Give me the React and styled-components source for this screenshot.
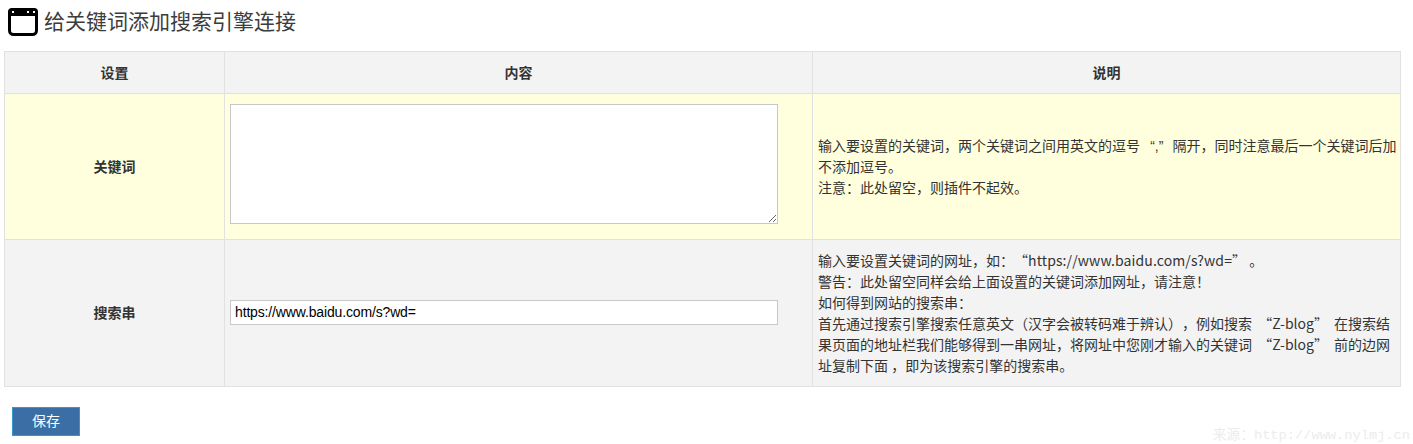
import styled, { createGlobalStyle } from 'styled-components';

const GlobalStyle = createGlobalStyle`
  html, body {
    margin: 0;
    padding: 0;
    background: #fff;
    font-family: "Noto Sans CJK SC", "Liberation Sans", sans-serif;
    color: #333;
  }
`;

function WindowIcon() {
  return (
    <svg width="30" height="28" viewBox="0 0 30 28">
      <rect x="1.5" y="1.5" width="27" height="25" rx="4" fill="#fff" stroke="#000" strokeWidth="3" />
      <path d="M4 0h22a4 4 0 0 1 4 4v4H0V4a4 4 0 0 1 4-4z" fill="#000" />
      <rect x="4" y="3" width="2" height="2" fill="#fff" />
      <rect x="19" y="3" width="2" height="2" fill="#fff" />
      <rect x="25" y="3" width="2" height="2" fill="#fff" />
    </svg>
  );
}

export default function App() {
  return (
    <>
      <GlobalStyle />
      <Page>
        <Title>
          <WindowIcon />
          <h1>给关键词添加搜索引擎连接</h1>
        </Title>

        <SettingTable>
          <colgroup>
            <col style={{ width: 220 }} />
            <col style={{ width: 588 }} />
            <col style={{ width: 588 }} />
          </colgroup>
          <thead>
            <tr>
              <HeadCell>设置</HeadCell>
              <HeadCell>内容</HeadCell>
              <HeadCell>说明</HeadCell>
            </tr>
          </thead>
          <tbody>
            <Row $tone="#ffffdd" $height={146}>
              <KeyCell>关键词</KeyCell>
              <td>
                <KeywordArea />
              </td>
              <NoteCell>
                输入要设置的关键词，两个关键词之间用英文的逗号 <CommaQuote>“,”</CommaQuote> 隔开，同时注意最后一个关键词后加
                <br />
                不添加逗号。
                <br />
                注意：此处留空，则插件不起效。
              </NoteCell>
            </Row>
            <Row $tone="#f3f3f3" $height={147}>
              <KeyCell>搜索串</KeyCell>
              <td>
                <SearchInput defaultValue="https://www.baidu.com/s?wd=" />
              </td>
              <NoteCell>
                输入要设置关键词的网址，如：<UrlQuote>“https://www.baidu.com/s?wd=”</UrlQuote> 。
                <br />
                警告：此处留空同样会给上面设置的关键词添加网址，请注意！
                <br />
                如何得到网站的搜索串：
                <br />
                首先通过搜索引擎搜索任意英文（汉字会被转码难于辨认），例如搜索 <WordQuote>“Z-blog”</WordQuote> 在搜索结
                <br />
                果页面的地址栏我们能够得到一串网址，将网址中您刚才输入的关键词 <WordQuote>“Z-blog”</WordQuote> 前的边网
                <br />
                址复制下面 ，即为该搜索引擎的搜索串。
              </NoteCell>
            </Row>
          </tbody>
        </SettingTable>

        <SaveButton type="button">保存</SaveButton>
        <Watermark>来源：http://www.nylmj.cn</Watermark>
      </Page>
    </>
  );
}

const Page = styled.div`
  position: relative;
  width: 1413px;
  height: 444px;
  overflow: hidden;
  padding: 7px 0 0 4px;
  box-sizing: border-box;
`;

const Title = styled.div`
  display: flex;
  align-items: center;
  gap: 6px;
  height: 30px;
  padding-left: 4px;
  margin-bottom: 14px;

  h1 {
    margin: 0 0 4px;
    font-size: 21px;
    line-height: 26px;
    font-weight: 400;
    color: #3c3c3c;
  }
`;

const SettingTable = styled.table`
  width: 1396px;
  table-layout: fixed;
  border-collapse: collapse;
  font-size: 14px;

  th,
  td {
    border: 1px solid #e1e1e1;
    padding: 0 5px;
    box-sizing: border-box;
  }
`;

const HeadCell = styled.th`
  height: 42px;
  background: #f3f3f3;
  font-size: 14px;
  font-weight: 700;
  color: #333;
  text-align: center;

  && {
    padding-bottom: 2px;
  }
`;

const Row = styled.tr`
  height: ${(props) => props.$height}px;
  background: ${(props) => props.$tone};
`;

const KeyCell = styled.td`
  font-size: 14px;
  font-weight: 700;
  text-align: center;

  && {
    padding-bottom: 2px;
  }
`;

const NoteCell = styled.td`
  font-size: 14px;
  line-height: 21px;
  white-space: nowrap;
  overflow: hidden;
  text-spacing-trim: space-all;
`;

const CommaQuote = styled.span`
  font-family: "Liberation Sans", sans-serif;
  line-height: 1;
  margin: 0 6px 0 7px;
`;

const UrlQuote = styled.span`
  letter-spacing: 0.1px;
`;

const WordQuote = styled.span`
  margin: 0 3px;
`;

const KeywordArea = styled.textarea`
  display: block;
  width: 548px;
  height: 120px;
  margin: 10px 0 15px;
  padding: 2px;
  box-sizing: border-box;
  border: 1px solid #c8c8c8;
  background: #fff;
`;

const SearchInput = styled.input`
  display: block;
  width: 548px;
  height: 25px;
  margin-bottom: 2px;
  padding: 0 4px;
  box-sizing: border-box;
  border: 1px solid #c8c8c8;
  background: #fff;
  font-family: "Liberation Sans", sans-serif;
  font-size: 14px;
  letter-spacing: -0.15px;
  color: #000;
`;

const SaveButton = styled.button`
  display: block;
  width: 68px;
  height: 29px;
  margin: 20px 0 0 8px;
  padding: 0 0 3px;
  border: 1px solid #3399cc;
  background: #3a6ea5;
  color: #fff;
  font-family: "Noto Sans CJK SC", sans-serif;
  font-size: 14px;
`;

const Watermark = styled.div`
  position: absolute;
  right: 3px;
  bottom: 1px;
  font-family: "Liberation Mono", "Noto Sans CJK SC", monospace;
  font-size: 13.7px;
  color: #ececec;
  white-space: nowrap;
`;
